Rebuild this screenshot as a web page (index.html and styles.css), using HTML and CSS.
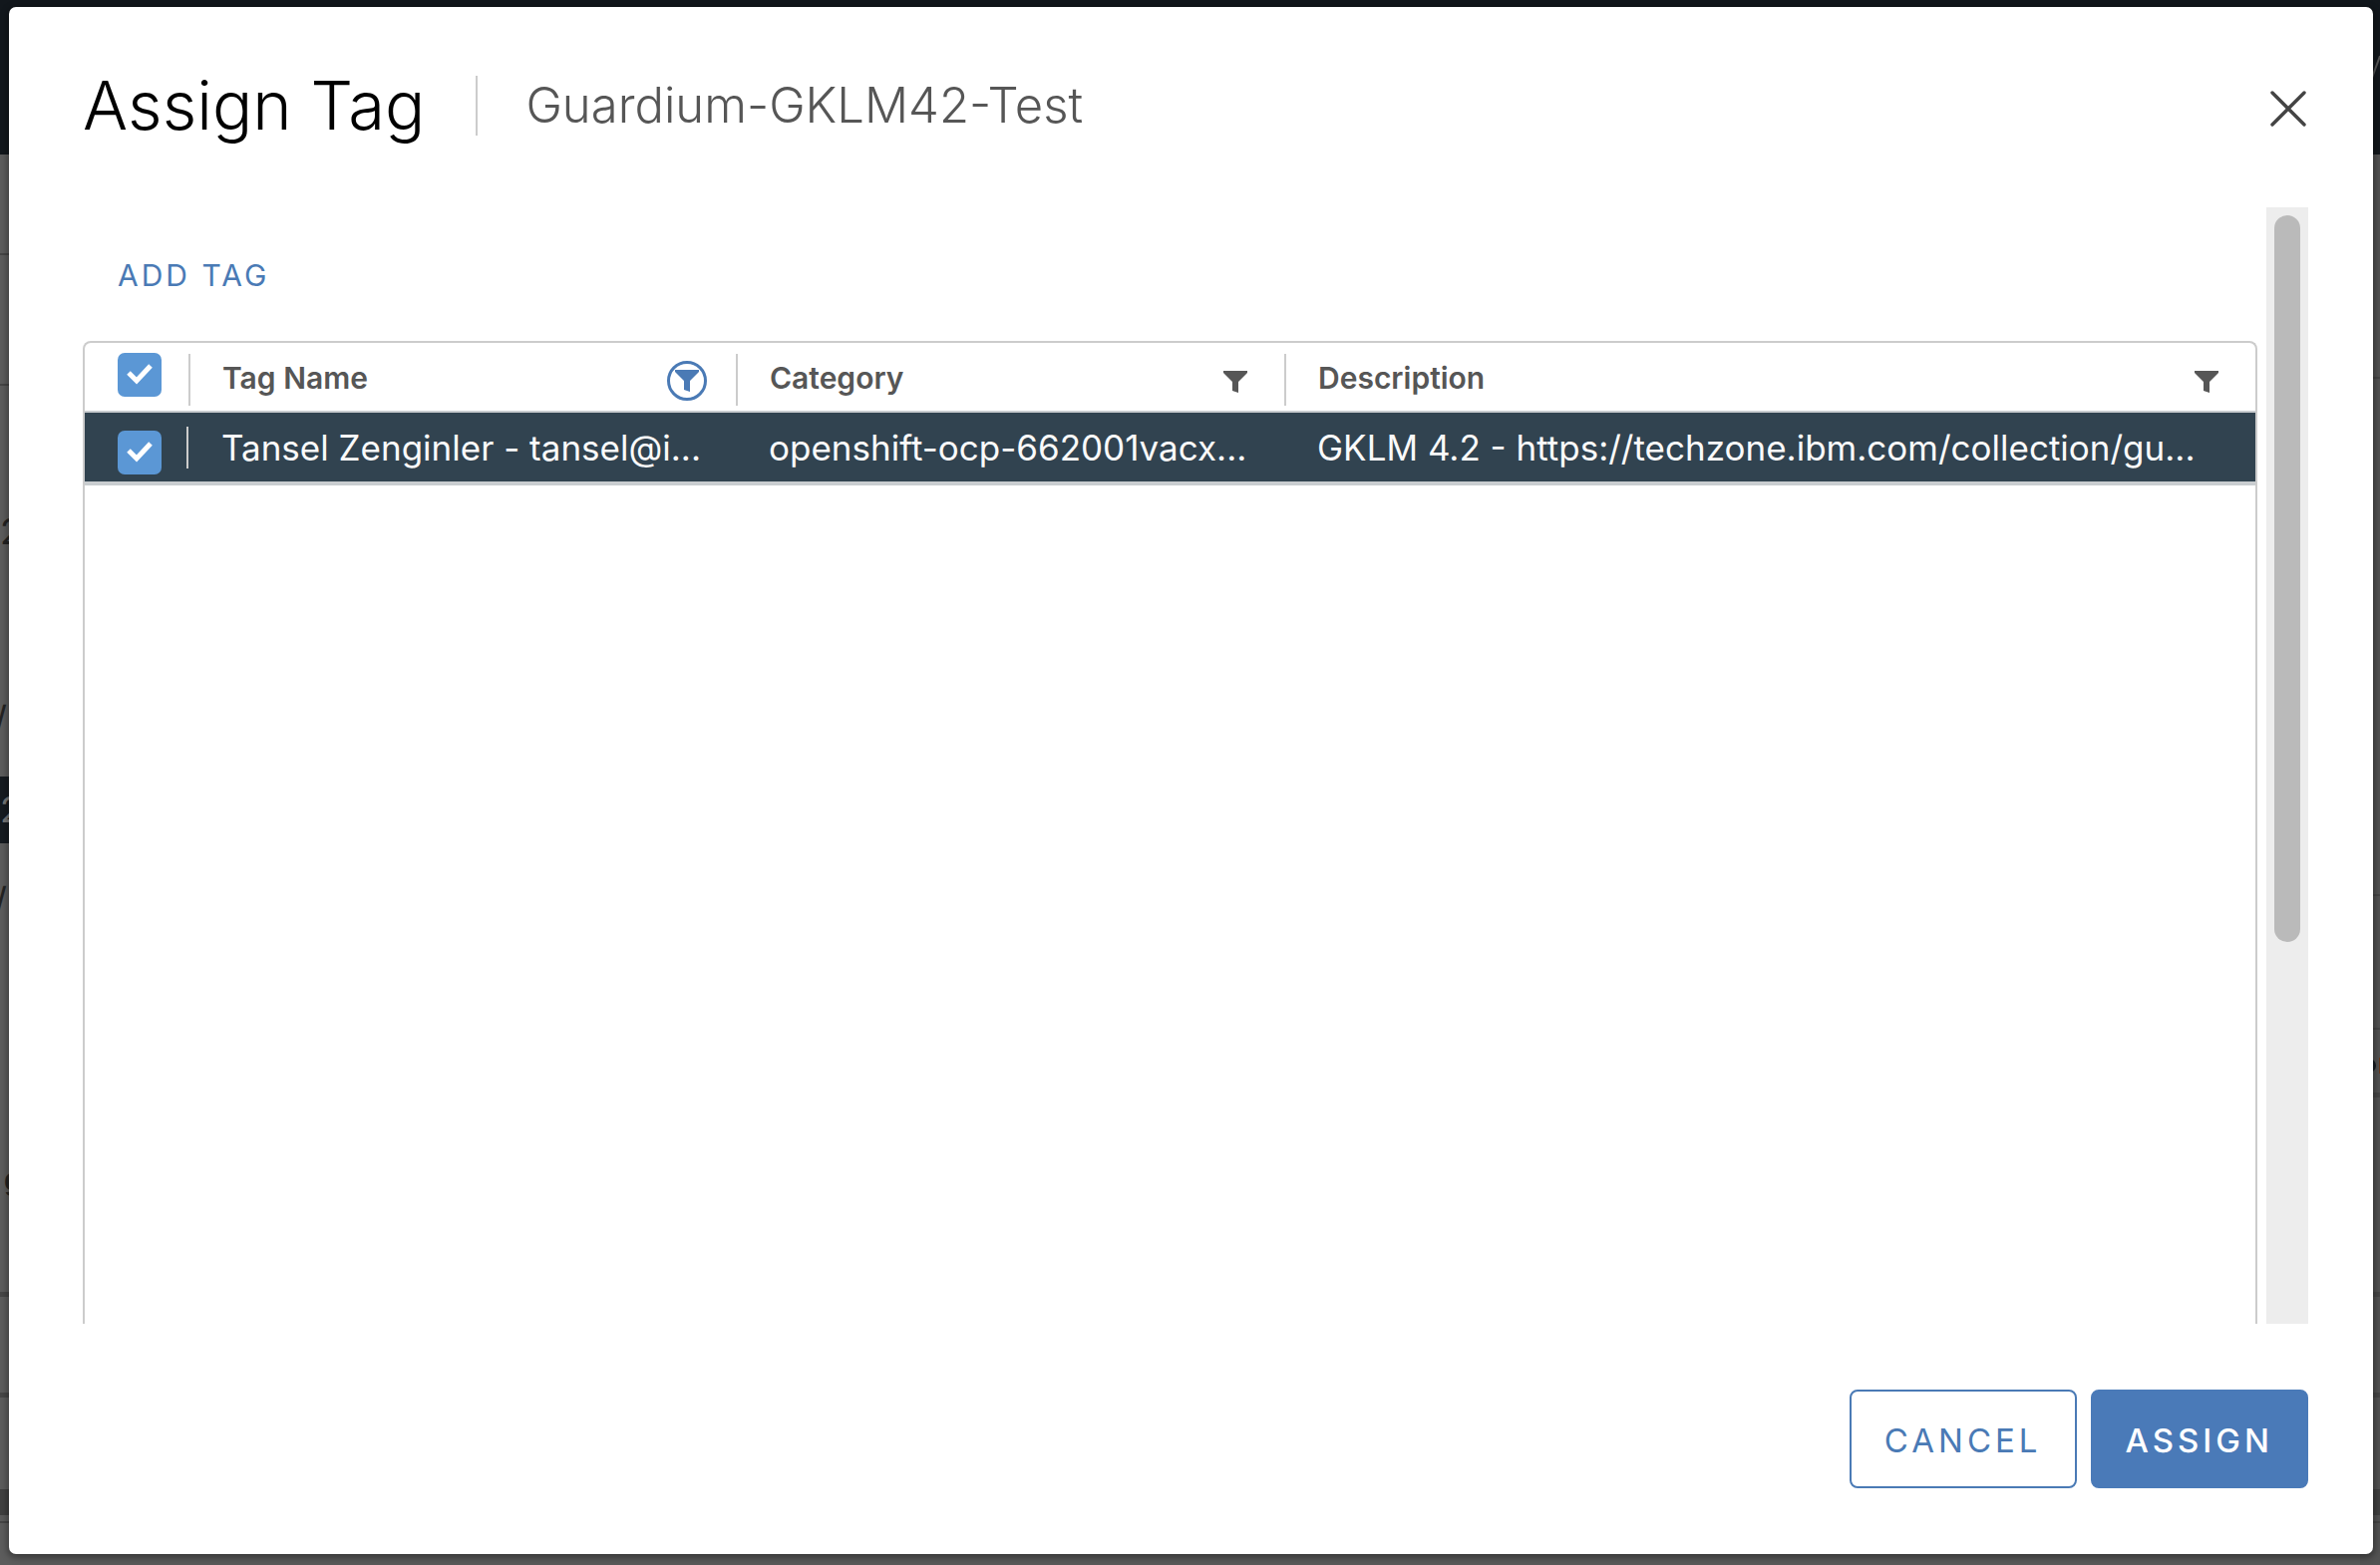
FILE: index.html
```html
<!DOCTYPE html>
<html lang="en">
<head>
<meta charset="utf-8">
<title>Assign Tag</title>
<link rel="stylesheet" href="styles.css">
</head>
<body>
<div class="backdrop" aria-hidden="true">
  <div class="strip strip-left">
    <div class="strip-header"></div>
    <div class="strip-row h101 line"></div>
    <div class="strip-row h131 line"></div>
    <div class="strip-row h113"></div>
    <div class="strip-row h67">2</div>
    <div class="strip-row h121"></div>
    <div class="strip-row h67 slash">/</div>
    <div class="strip-row h24"></div>
    <div class="strip-row h67 selected">2</div>
    <div class="strip-row h24"></div>
    <div class="strip-row h67 slash">/</div>
    <div class="strip-row h213"></div>
    <div class="strip-row h67 bold">g</div>
    <div class="strip-row h84 thick"></div>
    <div class="strip-row h101 thick"></div>
    <div class="strip-row h92"></div>
    <div class="strip-row h26 bar"></div>
    <div class="strip-row h8 line"></div>
  </div>
  <div class="strip strip-right">
    <div class="strip-header"><svg viewBox="0 0 20 155" width="20" height="155"><path d="M12 78 20 56" stroke="#555" stroke-width="2"/></svg></div>
    <div class="strip-row h225 line"></div>
    <div class="strip-row h519 line"></div>
    <div class="strip-row h134 line"></div>
    <div class="strip-row h68 thick marks"><span class="dot"></span><span class="tick"></span></div>
    <div class="strip-row h200 thick"></div>
    <div class="strip-row h101 thick"></div>
    <div class="strip-row h92"></div>
    <div class="strip-row h26 bar"></div>
    <div class="strip-row h8 line"></div>
  </div>
</div>

<main class="modal" role="dialog" aria-labelledby="dialog-title">
  <header class="modal-header">
    <h1 class="modal-title" id="dialog-title">Assign Tag</h1>
    <p class="modal-subject">Guardium-GKLM42-Test</p>
    <button class="close" type="button" aria-label="Close">
      <svg viewBox="0 0 40 40" width="40" height="40"><path d="M4 4 36 36M36 4 4 36" fill="none" stroke="currentColor" stroke-width="3.4" stroke-linecap="round"/></svg>
    </button>
  </header>

  <div class="modal-body">
    <div class="content">
      <button class="add-tag" type="button">ADD TAG</button>
      <div class="grid-frame">
        <table class="tags">
          <colgroup><col class="col-check"><col class="col-name"><col class="col-category"><col></colgroup>
          <thead>
            <tr>
              <th><span class="cell check-cell"><input class="check" type="checkbox" checked aria-label="Select all"></span></th>
              <th><span class="cell">Tag Name
                <button class="filter filter-active" type="button" aria-label="Filter tag name"><svg viewBox="0 0 24 24" width="24" height="24"><path d="M0 1H24V3L15 12V23L9 21V12L0 3Z" fill="currentColor"/></svg></button></span></th>
              <th><span class="cell">Category
                <button class="filter" type="button" aria-label="Filter category"><svg viewBox="0 0 24 24" width="24" height="24"><path d="M0 1H24V3L15 12V23L9 21V12L0 3Z" fill="currentColor"/></svg></button></span></th>
              <th><span class="cell">Description
                <button class="filter" type="button" aria-label="Filter description"><svg viewBox="0 0 24 24" width="24" height="24"><path d="M0 1H24V3L15 12V23L9 21V12L0 3Z" fill="currentColor"/></svg></button></span></th>
            </tr>
          </thead>
          <tbody>
            <tr>
              <td><span class="cell check-cell"><input class="check" type="checkbox" checked aria-label="Select Tansel Zenginler"></span></td>
              <td>Tansel Zenginler - tansel@i...</td>
              <td>openshift-ocp-662001vacx...</td>
              <td>GKLM 4.2 - https://techzone.ibm.com/collection/gu...</td>
            </tr>
          </tbody>
        </table>
      </div>
    </div>
    <div class="scrollbar"><div class="thumb"></div></div>
  </div>

  <footer class="modal-footer">
    <button class="btn" type="button">CANCEL</button>
    <button class="btn btn-primary" type="button">ASSIGN</button>
  </footer>
</main>
</body>
</html>
```
FILE: styles.css
```css
* {
  box-sizing: border-box;
}

body {
  margin: 0;
  height: 100vh;
  display: flex;
  padding: 7px 7px 11px 9px;
  overflow: hidden;
  background: #595959;
  font-family: Inter, "Liberation Sans", sans-serif;
  color: #565656;
}

button {
  font-family: inherit;
  margin: 0;
  padding: 0;
  border: 0;
  background: none;
  color: inherit;
}

/* Dimmed page behind the dialog */
.backdrop {
  position: absolute;
  inset: 0;
  display: flex;
  justify-content: space-between;
  overflow: hidden;
  background: linear-gradient(#12171c 155px, #595959 155px);
}

.strip {
  width: 20px;
  overflow: hidden;
  background: #5c5c5c;
}

.strip-right {
  background: #525252;
}

.strip-header {
  height: 155px;
  background: #12171c;
}

.strip-row {
  overflow: hidden;
  font-size: 36px;
  line-height: 67px;
  color: #222;
}

.line { border-bottom: 2px solid #454545; }
.thick { border-bottom: 5px solid #464646; }
.bar { background: #404040; }
.selected { background: #161b20; color: #777; }
.slash { text-indent: -6px; }
.bold { padding-left: 4px; font-size: 30px; font-weight: 700; }
.h8 { height: 8px; }
.h24 { height: 24px; }
.h26 { height: 26px; }
.h67 { height: 67px; }
.h68 { height: 68px; }
.h84 { height: 84px; }
.h92 { height: 92px; }
.h101 { height: 101px; }
.h113 { height: 113px; }
.h121 { height: 121px; }
.h131 { height: 131px; }
.h134 { height: 134px; }
.h200 { height: 200px; }
.h213 { height: 213px; }
.h225 { height: 225px; }
.h519 { height: 519px; }

.marks {
  display: flex;
  align-items: center;
  justify-content: flex-end;
  gap: 3px;
  padding-top: 8px;
}

.dot {
  width: 14px;
  height: 14px;
  border-radius: 50%;
  background: #161b20;
}

.tick {
  width: 1px;
  height: 16px;
  background: #6b3a1c;
}

.modal {
  position: relative;
  flex: 1;
  display: flex;
  flex-direction: column;
  padding: 64px 65px 66px 74px;
  border-radius: 7px;
  background: #fff;
  box-shadow: 0 2px 6px 2px rgba(0, 0, 0, 0.35);
}

.modal-header {
  display: flex;
  align-items: center;
  height: 70px;
}

.modal-title {
  margin: 0;
  padding-right: 51px;
  font-size: 67px;
  line-height: 60px;
  font-weight: 300;
  color: #000;
}

.modal-subject {
  margin: 0;
  padding-left: 48px;
  border-left: 2px solid #ccc;
  font-size: 49px;
  line-height: 60px;
  font-weight: 300;
}

.close {
  display: flex;
  margin: 6px 0 0 auto;
  color: #444;
}

.modal-body {
  flex: 1;
  display: flex;
  gap: 9px;
  min-height: 0;
  margin-top: 67px;
}

.content {
  flex: 1;
  min-width: 0;
  display: flex;
  flex-direction: column;
  align-items: flex-start;
}

.add-tag {
  margin: 48px 0 45px 35px;
  font-size: 30px;
  line-height: 41px;
  letter-spacing: 3px;
  color: #4a7ab5;
}

.grid-frame {
  flex: 1;
  align-self: stretch;
  border: 2px solid #ccc;
  border-bottom: 0;
  border-radius: 8px 8px 0 0;
}

.tags {
  width: 100%;
  table-layout: fixed;
  border-collapse: separate;
  border-spacing: 0;
}

.col-check { width: 104px; }
.col-name { width: 549px; }
.col-category { width: 550px; }

.tags th,
.tags td {
  padding: 0;
  text-align: left;
}

.tags th {
  height: 70px;
  padding-bottom: 5px;
  border-bottom: 2px solid #c9cdd0;
  font-size: 30px;
  line-height: 34px;
  font-weight: 600;
  vertical-align: bottom;
}

.cell {
  display: flex;
  align-items: center;
  justify-content: space-between;
  height: 52px;
}

.tags th + th .cell {
  padding: 0 35px 4px 32px;
  border-left: 2px solid #ccc;
}

.tags td {
  height: 73px;
  padding-left: 33px;
  border-bottom: 4px solid #c9cdd0;
  background: #314350;
  font-size: 35px;
  line-height: 44px;
  color: #fafafa;
  white-space: nowrap;
}

.tags td:first-child {
  padding: 0;
}

.check-cell {
  padding: 0 0 10px 33px;
}

.tags td .check-cell {
  height: 42px;
  padding: 11px 0 0 33px;
  border-right: 2px solid #ccc;
}

.check {
  appearance: none;
  flex: none;
  width: 44px;
  height: 44px;
  margin: 0;
  border-radius: 7px;
  background: #5b97d5 url("data:image/svg+xml,%3Csvg xmlns='http://www.w3.org/2000/svg' viewBox='0 0 44 44'%3E%3Cpath d='M11 20l8 8 14-15' fill='none' stroke='%23fff' stroke-width='5'/%3E%3C/svg%3E") center / 44px 44px;
}

.filter {
  display: flex;
  align-items: center;
  justify-content: center;
  width: 40px;
  height: 40px;
  margin: 8px -6px 0 0;
}

.filter-active {
  margin-top: 6px;
  border: 3px solid #4a7ab5;
  border-radius: 50%;
  color: #4a7ab5;
}

.scrollbar {
  width: 42px;
  padding: 8px;
  background: #ededed;
}

.thumb {
  height: 66%;
  border-radius: 13px;
  background: #bababa;
}

.modal-footer {
  display: flex;
  justify-content: flex-end;
  gap: 14px;
  padding-top: 66px;
}

.btn {
  height: 99px;
  padding: 2px 33px 0;
  border: 2px solid #4a7ab5;
  border-radius: 8px;
  font-size: 33px;
  line-height: 40px;
  letter-spacing: 4px;
  color: #4a7ab5;
}

.btn-primary {
  border-color: #4a7ab8;
  background: #4a7ab8;
  font-weight: 500;
  color: #fff;
}
```
